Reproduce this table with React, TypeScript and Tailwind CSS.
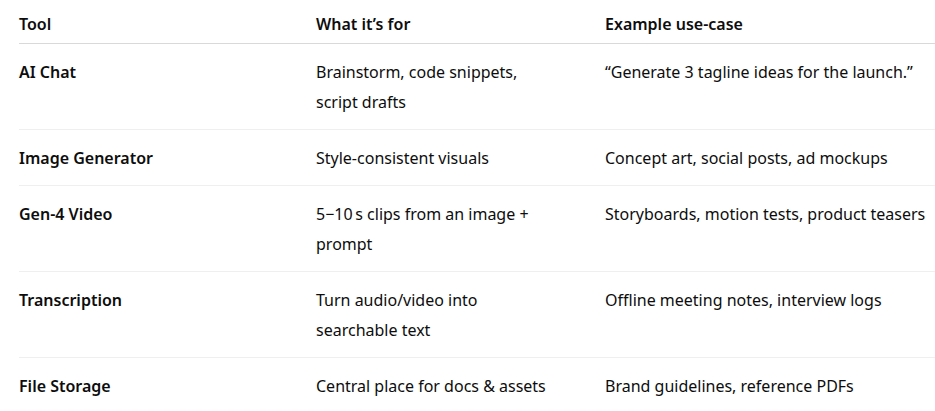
const rows = [
  {
    tool: "AI Chat",
    purpose: ["Brainstorm, code snippets,", "script drafts"],
    example: "“Generate 3 tagline ideas for the launch.”",
  },
  {
    tool: "Image Generator",
    purpose: ["Style-consistent visuals"],
    example: "Concept art, social posts, ad mockups",
  },
  {
    tool: "Gen-4 Video",
    purpose: ["5\u221210\u202Fs clips from an image +", "prompt"],
    example: "Storyboards, motion tests, product teasers",
  },
  {
    tool: "Transcription",
    purpose: ["Turn audio/video into", "searchable text"],
    example: "Offline meeting notes, interview logs",
  },
  {
    tool: "File Storage",
    purpose: ["Central place for docs & assets"],
    example: "Brand guidelines, reference PDFs",
  },
]

export default function App() {
  return (
    <div className="min-h-screen bg-white overflow-hidden pl-[19px] font-['Noto_Sans',sans-serif] text-[16px] text-[#0d0d0d]">
      <div className="w-[916px]">
        <div className="grid grid-cols-[297px_289px_1fr] border-b border-[#d9d9d9] pt-[9px] pb-[4px] leading-[30px] font-semibold">
          <div>Tool</div>
          <div>What it’s for</div>
          <div>Example use-case</div>
        </div>
        {rows.map((row, i) => (
          <div
            key={i}
            className={
              "grid grid-cols-[297px_289px_1fr] py-[12.5px] leading-[30px] " +
              (i < rows.length - 1 ? "border-b border-[#efefef]" : "")
            }
          >
            <div className="font-semibold">{row.tool}</div>
            <div>
              {row.purpose.map((line, j) => (
                <div key={j} className="whitespace-nowrap">{line}</div>
              ))}
            </div>
            <div className="whitespace-nowrap">{row.example}</div>
          </div>
        ))}
      </div>
    </div>
  )
}
